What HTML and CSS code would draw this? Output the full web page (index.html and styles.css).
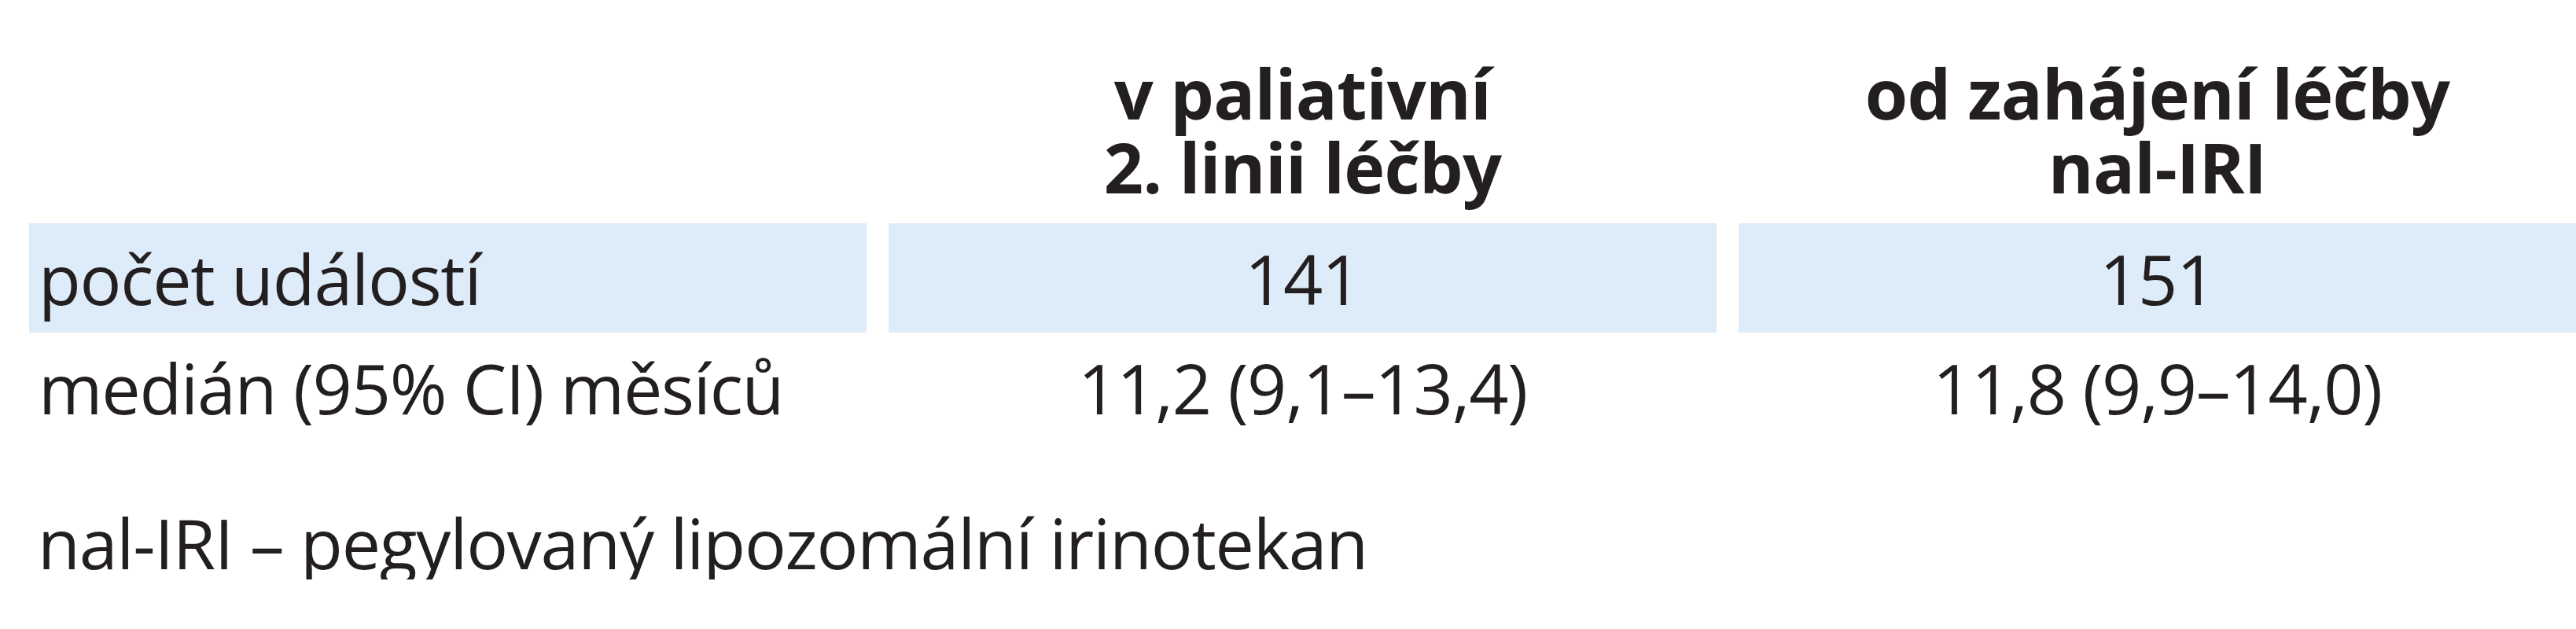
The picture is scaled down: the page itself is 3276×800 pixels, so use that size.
FILE: index.html
```html
<!DOCTYPE html>
<html lang="cs">
<head>
<meta charset="utf-8">
<title>Tabulka</title>
<link rel="stylesheet" href="styles.css">
</head>
<body>
<main class="page">
  <div class="table">
    <div class="cell head"></div>
    <div class="cell head"><span class="line">v paliativní</span><span class="line">2. linii léčby</span></div>
    <div class="cell head"><span class="line">od zahájení léčby</span><span class="line">nal-IRI</span></div>

    <div class="cell label shaded">počet událostí</div>
    <div class="cell value shaded">141</div>
    <div class="cell value shaded">151</div>

    <div class="cell label">medián (95% CI) měsíců</div>
    <div class="cell value">11,2 (9,1–13,4)</div>
    <div class="cell value">11,8 (9,9–14,0)</div>
  </div>
  <p class="note">nal-IRI – pegylovaný lipozomální irinotekan</p>
</main>
</body>
</html>
```
FILE: styles.css
```css
html, body {
  margin: 0;
  padding: 0;
  background: #ffffff;
}
body {
  overflow: hidden;
  font-family: "Open Sans", "Liberation Sans", sans-serif;
  font-size: 88px;
  line-height: 94px;
  letter-spacing: -1.25px;
  color: #231f20;
}
.page {
  padding: 48px 0 0 37px;
}
.table {
  display: grid;
  grid-template-columns: 1065px 1053px 1065px;
  column-gap: 28px;
}
.cell {
  padding: 23px 0 22px;
  white-space: nowrap;
}
.head {
  padding-bottom: 25px;
  font-weight: 700;
  letter-spacing: -0.75px;
  text-align: center;
}
.line {
  display: block;
  height: 94px;
}
.label {
  padding-left: 12px;
}
.value {
  text-align: center;
}
.shaded {
  background: #deebf8;
}
.note {
  margin: 81px 0 0 11px;
}
```
